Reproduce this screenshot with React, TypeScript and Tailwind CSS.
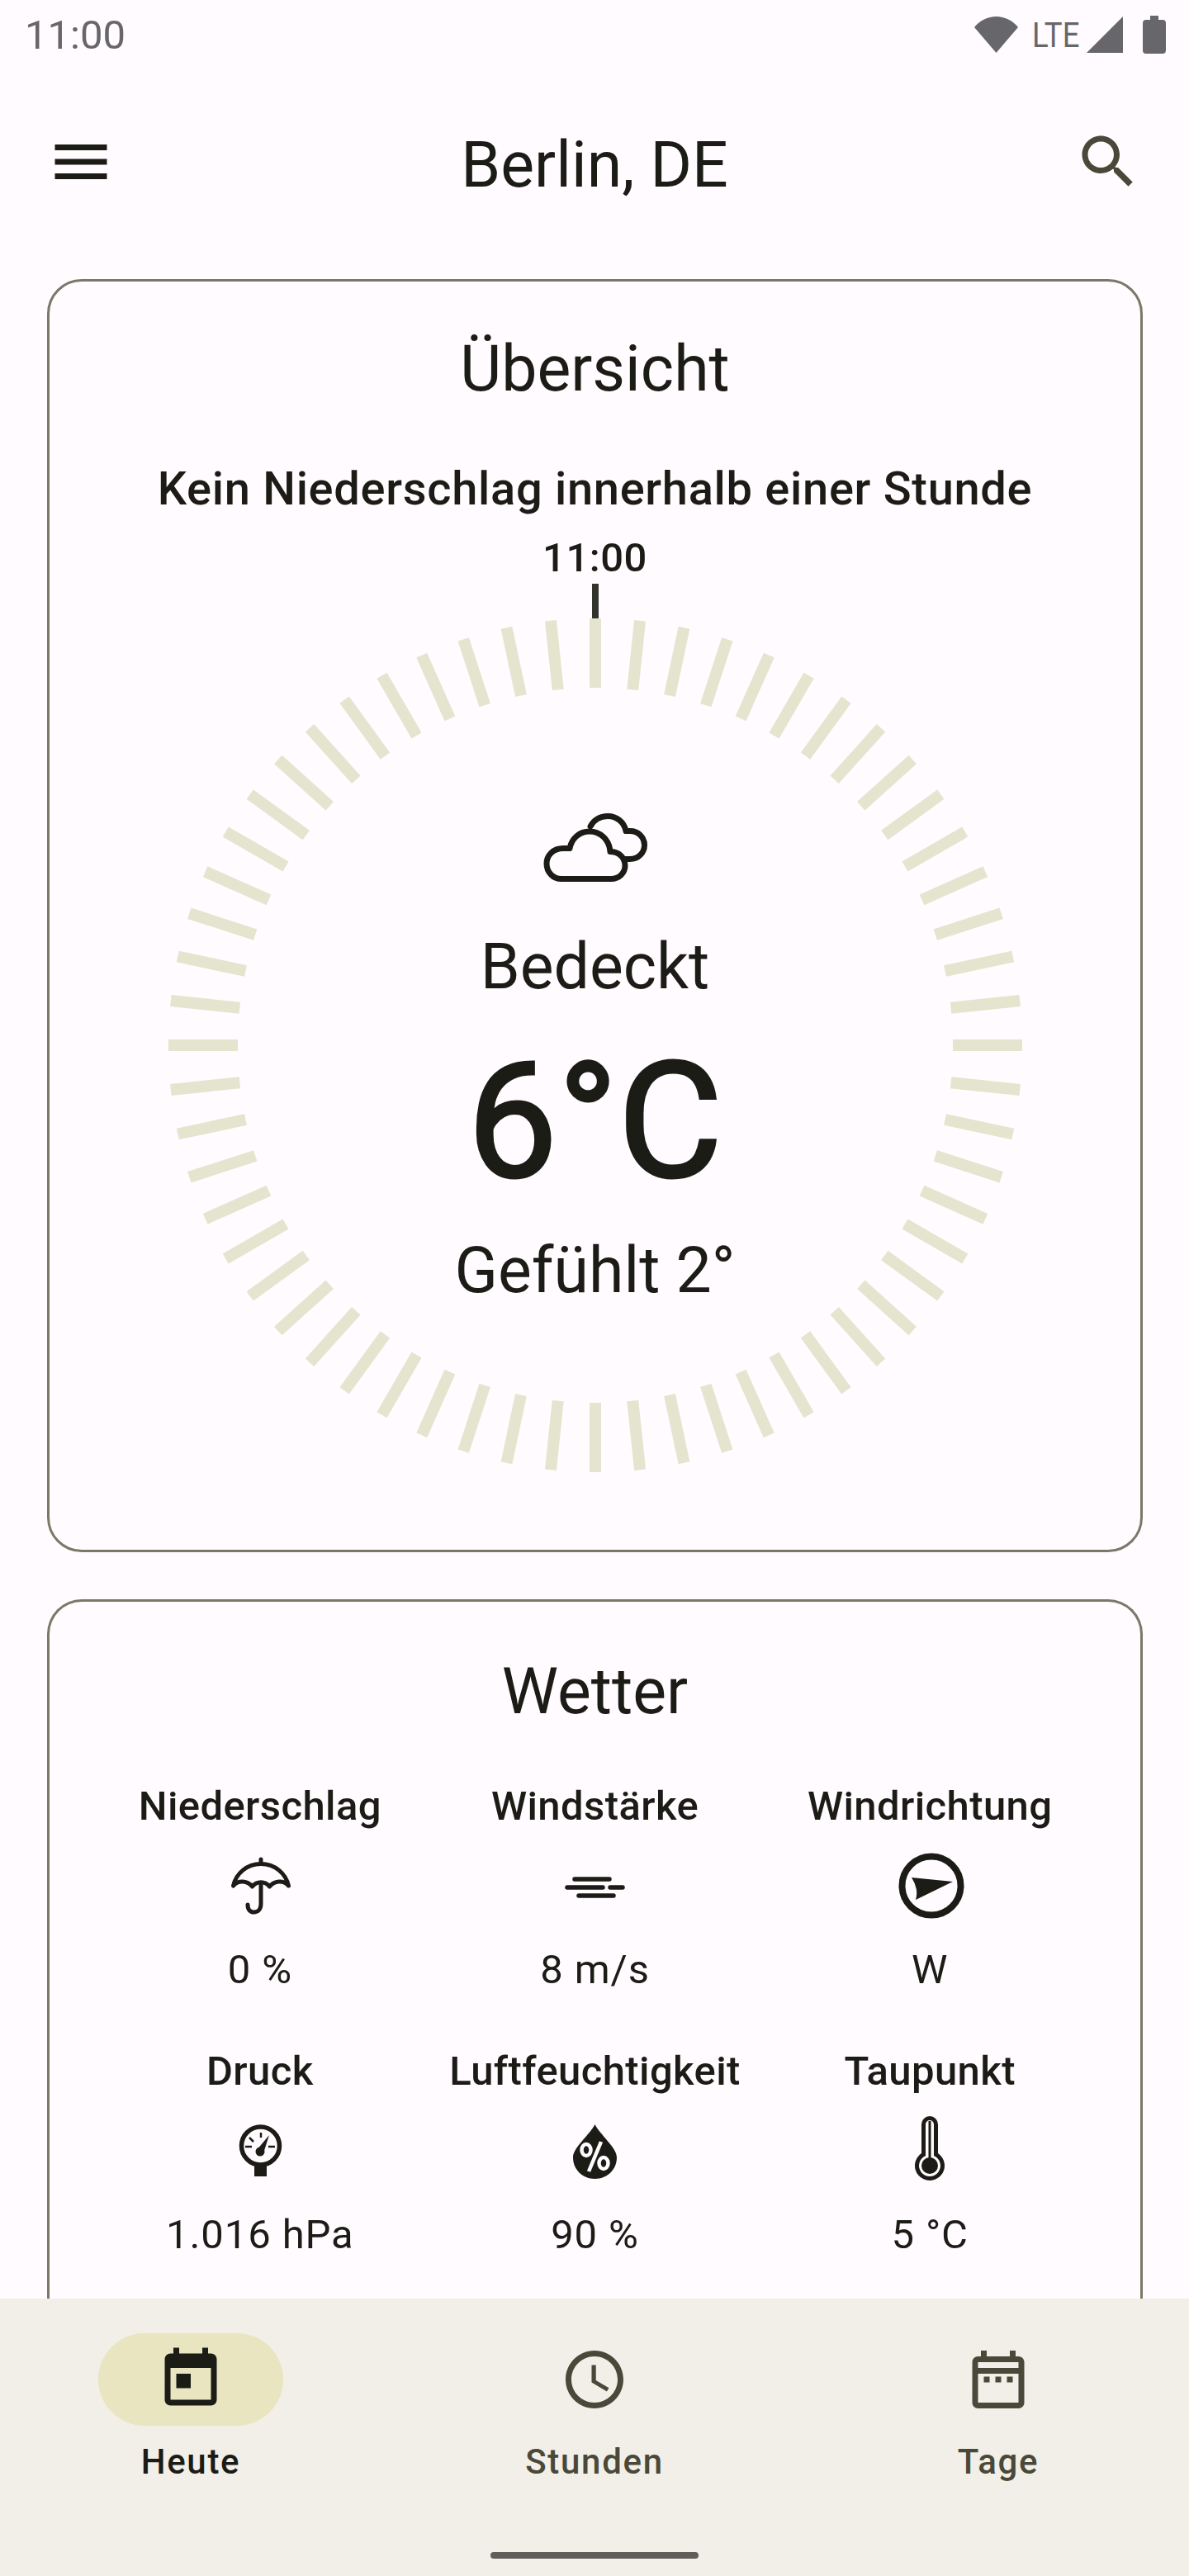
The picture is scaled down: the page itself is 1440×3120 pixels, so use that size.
import React from "react";

const ink = "#1c1c17";

function Mat({ d, size = 84, color = ink }: { d: string; size?: number; color?: string }) {
  return (
    <svg width={size} height={size} viewBox="0 0 24 24" fill={color}>
      <path d={d} />
    </svg>
  );
}

function Dial() {
  const ticks = Array.from({ length: 60 }, (_, i) => i * 6);
  return (
    <svg width={1120} height={1120} viewBox="-560 -560 1120 1120" className="[grid-area:1/1]">
      {ticks.map((a) => (
        <rect key={a} x={-7} y={-517} width={14} height={84} fill="#e5e4cf" transform={`rotate(${a})`} />
      ))}
      <rect x={-4} y={-559} width={8} height={42} fill="#33332d" />
    </svg>
  );
}

function CloudIcon() {
  return (
    <svg width={126} height={84} viewBox="0 0 126 84" fill="none" stroke={ink} strokeWidth={7} strokeLinejoin="round" strokeLinecap="round">
      <path d="M22 79.500H82C92 79.500 99 72 99 63.500C99 54 92 46.500 81 46.500C80 32 69 22 56 22C44 22 34.500 30 32 42.500H24C12 42.500 4 51 4 61C4 71.500 12 79.500 22 79.500Z" />
      <path d="M57 16C61 8 69 3.500 78 3.500C89 3.500 98 11 100 21.500H105C115 21.500 122.500 29 122.500 38.500C122.500 48 115 55.500 105 55.500H99" />
    </svg>
  );
}

function Umbrella() {
  return (
    <svg width={84} height={84} viewBox="0 0 84 84" fill="none" stroke={ink} strokeWidth={5} strokeLinecap="round" strokeLinejoin="round">
      <path d="M9.500 42C13 27 26 15.500 43 15.500C60 15.500 73 27 76.500 42C70 34.500 59 36 53.500 43C48 36 38 36 32.500 43C27 36 16 34.500 9.500 42Z" />
      <path d="M43 10V15" />
      <path d="M43 39V64C43 71 39 74 34.500 74C30 74 27 71 27 65" />
    </svg>
  );
}

function Wind() {
  return (
    <svg width={84} height={84} viewBox="0 0 84 84" fill="none" stroke={ink} strokeWidth={5.500} strokeLinecap="round">
      <path d="M18 34H60M9 44H52M61 44H76M23 54H65" />
    </svg>
  );
}

function Compass() {
  return (
    <svg width={84} height={84} viewBox="0 0 84 84">
      <circle cx={44} cy={42} r={35.500} fill="none" stroke={ink} strokeWidth={8} />
      <path d="M20 32L70 37L25 59Q29 46 20 32Z" fill={ink} />
    </svg>
  );
}

function Gauge() {
  return (
    <svg width={84} height={84} viewBox="0 0 84 84">
      <circle cx={42.500} cy={36} r={23} fill="none" stroke={ink} strokeWidth={5.500} />
      <rect x={35} y={57} width={15} height={16} fill={ink} />
      <path d="M24 37H32M52 37H60M43 20V26M29 26L34 31" stroke={ink} strokeWidth={2.500} />
      <circle cx={42} cy={43} r={5.500} fill={ink} />
      <path d="M38 41L53 23L46 45Z" fill={ink} />
    </svg>
  );
}

function Drop() {
  return (
    <svg width={84} height={84} viewBox="0 0 84 84">
      <path d="M42.500 10C49 23 69 38 69 50C69 65 57 76 42.500 76C28 76 16 65 16 50C16 38 36 23 42.500 10Z" fill={ink} />
      <g fill="none" stroke="#fffbfe" strokeWidth={4.500}>
        <ellipse cx={32} cy={41} rx={5.500} ry={7} />
        <ellipse cx={53} cy={57} rx={5.500} ry={7} />
        <path d="M50 31L35 67" />
      </g>
    </svg>
  );
}

function Thermo() {
  return (
    <svg width={84} height={84} viewBox="0 0 84 84">
      <path d="M32 45V10A10 10 0 0 1 52 10V45A18 18 0 1 1 32 45Z" fill={ink} />
      <path d="M37 48V10A5 5 0 0 1 47 10V48A13 13 0 1 1 37 48Z" fill="#fffbfe" />
      <circle cx={42} cy={60} r={10} fill={ink} />
      <rect x={40.500} y={6} width={3} height={50} fill={ink} />
    </svg>
  );
}

function Metric({ label, value, icon, gap }: { label: string; value: string; icon: React.ReactNode; gap?: boolean }) {
  return (
    <div className={`flex flex-col items-center ${gap ? "mt-[53px]" : ""}`}>
      <div className="text-[49px] leading-[70px] font-medium tracking-[0.4px] whitespace-nowrap">{label}</div>
      <div className="mt-[19px] h-[84px]">{icon}</div>
      <div className="mt-[25px] text-[49px] leading-[70px] tracking-[0.9px] whitespace-nowrap">{value}</div>
    </div>
  );
}

function NavItem({ label, d, active }: { label: string; d: string; active?: boolean }) {
  const color = active ? ink : "#4a4939";
  return (
    <div className="flex w-[224px] flex-col items-center">
      <div className={`flex h-[112px] w-[224px] items-center justify-center rounded-full ${active ? "bg-[#e8e5c0]" : ""}`}>
        <Mat d={d} color={color} />
      </div>
      <div
        className={`mt-[14px] text-[42px] leading-[60px] font-medium tracking-[1.7px] ${active ? "text-[#1c1c17]" : "text-[#4a4939]"}`}
      >
        {label}
      </div>
    </div>
  );
}

export default function App() {
  return (
    <div className="flex h-[3120px] w-[1440px] flex-col overflow-hidden bg-[#fffbfe] font-['Roboto',sans-serif] text-[#1c1c17]">
      <div className="flex h-[84px] shrink-0 items-center justify-between pr-[28px] pl-[30px] text-[#67666a]">
        <div className="mt-[2px] text-[49px] leading-[84px]">11:00</div>
        <div className="flex items-center">
          <svg width={53} height={44} viewBox="0 4 24 17" preserveAspectRatio="none" fill="#67666a">
            <path d="M24 8.980C20.930 5.900 16.690 4 12 4S3.070 5.900 0 8.980L12 21 24 8.980z" />
          </svg>
          <div className="ml-[17px] mr-[9px] flex w-[57px] justify-center">
            <div className="origin-center scale-x-[0.85] text-[43px] leading-[44px] whitespace-nowrap">LTE</div>
          </div>
          <svg width={44} height={44} viewBox="0 0 44 44" fill="#67666a">
            <path d="M44 0V44H0Z" />
          </svg>
          <svg width={28} height={46} viewBox="0 0 28 46" fill="#67666a" className="ml-[24px]">
            <path d="M9 0H19V5H24Q28 5 28 9V42Q28 46 24 46H4Q0 46 0 42V9Q0 5 4 5H9Z" />
          </svg>
        </div>
      </div>

      <div className="flex h-[224px] shrink-0 items-center justify-between px-[56px]">
        <Mat d="M3 18h18v-2H3v2zm0-5h18v-2H3v2zm0-7v2h18V6H3z" />
        <div className="mt-[7px] text-[77px] leading-[100px]">Berlin, DE</div>
        <Mat
          color="#4a4939"
          d="M15.500 14h-.790l-.280-.270C15.410 12.590 16 11.110 16 9.500 16 5.910 13.090 3 9.500 3S3 5.910 3 9.500 5.910 16 9.500 16c1.610 0 3.090-.590 4.230-1.570l.270.280v.790l5 4.990L20.490 19l-4.990-5zm-6 0C7.010 14 5 11.990 5 9.500S7.010 5 9.500 5 14 7.010 14 9.500 11.990 14 9.500 14z"
        />
      </div>

      <div className="mt-[30px] mr-[56px] ml-[57px] flex shrink-0 flex-col items-center rounded-[42px] border-[3px] border-[#7a7869] pt-[56px] pb-[51px]">
        <div className="text-[77px] leading-[100px]">Übersicht</div>
        <div className="mt-[60px] text-[56px] leading-[70px] font-medium tracking-[0.7px]">Kein Niederschlag innerhalb einer Stunde</div>
        <div className="mt-[21px] text-[49px] leading-[56px] font-medium tracking-[0.5px]">11:00</div>
        <div className="mt-[2px] grid">
          <Dial />
          <div className="flex flex-col items-center pt-[279px] [grid-area:1/1]">
            <CloudIcon />
            <div className="mt-[52px] text-[77px] leading-[100px]">Bedeckt</div>
            <div className="mt-[18px] text-[195px] leading-[240px] [-webkit-text-stroke:3px_#1c1c17]">6°C</div>
            <div className="mt-[10px] text-[77px] leading-[100px]">Gefühlt 2°</div>
          </div>
        </div>
      </div>

      <div className="mt-[57px] mr-[56px] ml-[57px] shrink-0 rounded-t-[42px] border-[3px] border-b-0 border-[#7a7869] px-[52px] pt-[59px] pb-[200px]">
        <div className="text-center text-[77px] leading-[100px]">Wetter</div>
        <div className="mt-[54px] grid grid-cols-3">
          <Metric label="Niederschlag" value="0 %" icon={<Umbrella />} />
          <Metric label="Windstärke" value="8 m/s" icon={<Wind />} />
          <Metric label="Windrichtung" value="W" icon={<Compass />} />
          <Metric gap label="Druck" value="1.016 hPa" icon={<Gauge />} />
          <Metric gap label="Luftfeuchtigkeit" value="90 %" icon={<Drop />} />
          <Metric gap label="Taupunkt" value="5 °C" icon={<Thermo />} />
        </div>
      </div>

      <div className="fixed top-[2784px] left-0 flex h-[336px] w-[1440px] flex-col items-center bg-[#f1efe8] pt-[42px]">
        <div className="flex w-full justify-between px-[119px]">
          <NavItem
            active
            label="Heute"
            d="M19 3h-1V1h-2v2H8V1H6v2H5c-1.110 0-1.990.900-1.990 2L3 19c0 1.100.890 2 2 2h14c1.100 0 2-.900 2-2V5c0-1.100-.900-2-2-2zm0 16H5V8h14v11zM7 10h5v5H7z"
          />
          <NavItem
            label="Stunden"
            d="M11.990 2C6.470 2 2 6.480 2 12s4.470 10 9.990 10C17.520 22 22 17.520 22 12S17.520 2 11.990 2zM12 20c-4.420 0-8-3.580-8-8s3.580-8 8-8 8 3.580 8 8-3.580 8-8 8zm.500-13H11v6l5.250 3.150.750-1.230-4.500-2.670z"
          />
          <NavItem
            label="Tage"
            d="M7 11h2v2H7v-2zm14-5v14c0 1.100-.900 2-2 2H5c-1.110 0-2-.900-2-2l.010-14c0-1.100.880-2 1.990-2h1V2h2v2h8V2h2v2h1c1.100 0 2 .900 2 2zM5 8h14V6H5v2zm14 12V10H5v10h14zm-4-7h2v-2h-2v2zm-4 0h2v-2h-2v2z"
          />
        </div>
        <div className="mt-auto mb-[21px] h-[8px] w-[252px] rounded-full bg-[#5f5e5a]" />
      </div>
    </div>
  );
}
